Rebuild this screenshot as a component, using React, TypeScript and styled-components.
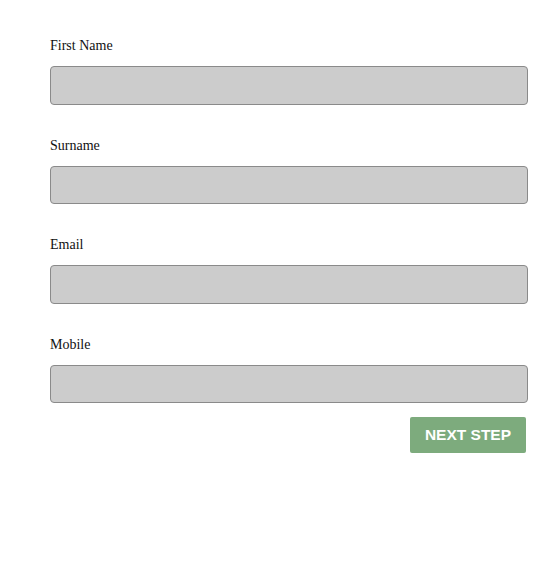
import React from "react";
import styled, { createGlobalStyle } from "styled-components";

const Global = createGlobalStyle`
  html, body { margin: 0; padding: 0; background: #fff; }
  body { font-family: "Liberation Serif", "Times New Roman", serif; }
`;

const Form = styled.form`
  display: flex;
  flex-direction: column;
  width: 478px;
  padding: 38px 0 0 50px;
`;

const Field = styled.div<{ $last?: boolean }>`
  display: flex;
  flex-direction: column;
  margin-bottom: ${(p) => (p.$last ? "0" : "33px")};
`;

const Label = styled.label`
  font-family: "Liberation Serif", "Times New Roman", serif;
  font-size: 14px;
  line-height: 16px;
  color: #111;
  margin-bottom: 12px;
`;

const Input = styled.input`
  box-sizing: border-box;
  width: 478px;
  height: 38.5px;
  background: #cccccc;
  border: 1px solid #8a8a8a;
  border-radius: 4px;
  margin: 0;
  padding: 0 10px;
  outline: none;
`;

const Actions = styled.div`
  display: flex;
  justify-content: flex-end;
  padding-right: 2px;
  margin-top: 14px;
`;

const Button = styled.button`
  width: 116px;
  height: 36px;
  background: #7dab7d;
  color: #fff;
  border: none;
  border-radius: 2px;
  font-family: "Liberation Sans", Arial, sans-serif;
  font-weight: bold;
  font-size: 15.5px;
  padding: 0;
  cursor: pointer;
`;

const fields = ["First Name", "Surname", "Email", "Mobile"];

export default function App() {
  return (
    <>
      <Global />
      <Form onSubmit={(e) => e.preventDefault()}>
        {fields.map((f, i) => (
          <Field key={f} $last={i === fields.length - 1}>
            <Label>{f}</Label>
            <Input type="text" />
          </Field>
        ))}
        <Actions>
          <Button type="submit">NEXT STEP</Button>
        </Actions>
      </Form>
    </>
  );
}
